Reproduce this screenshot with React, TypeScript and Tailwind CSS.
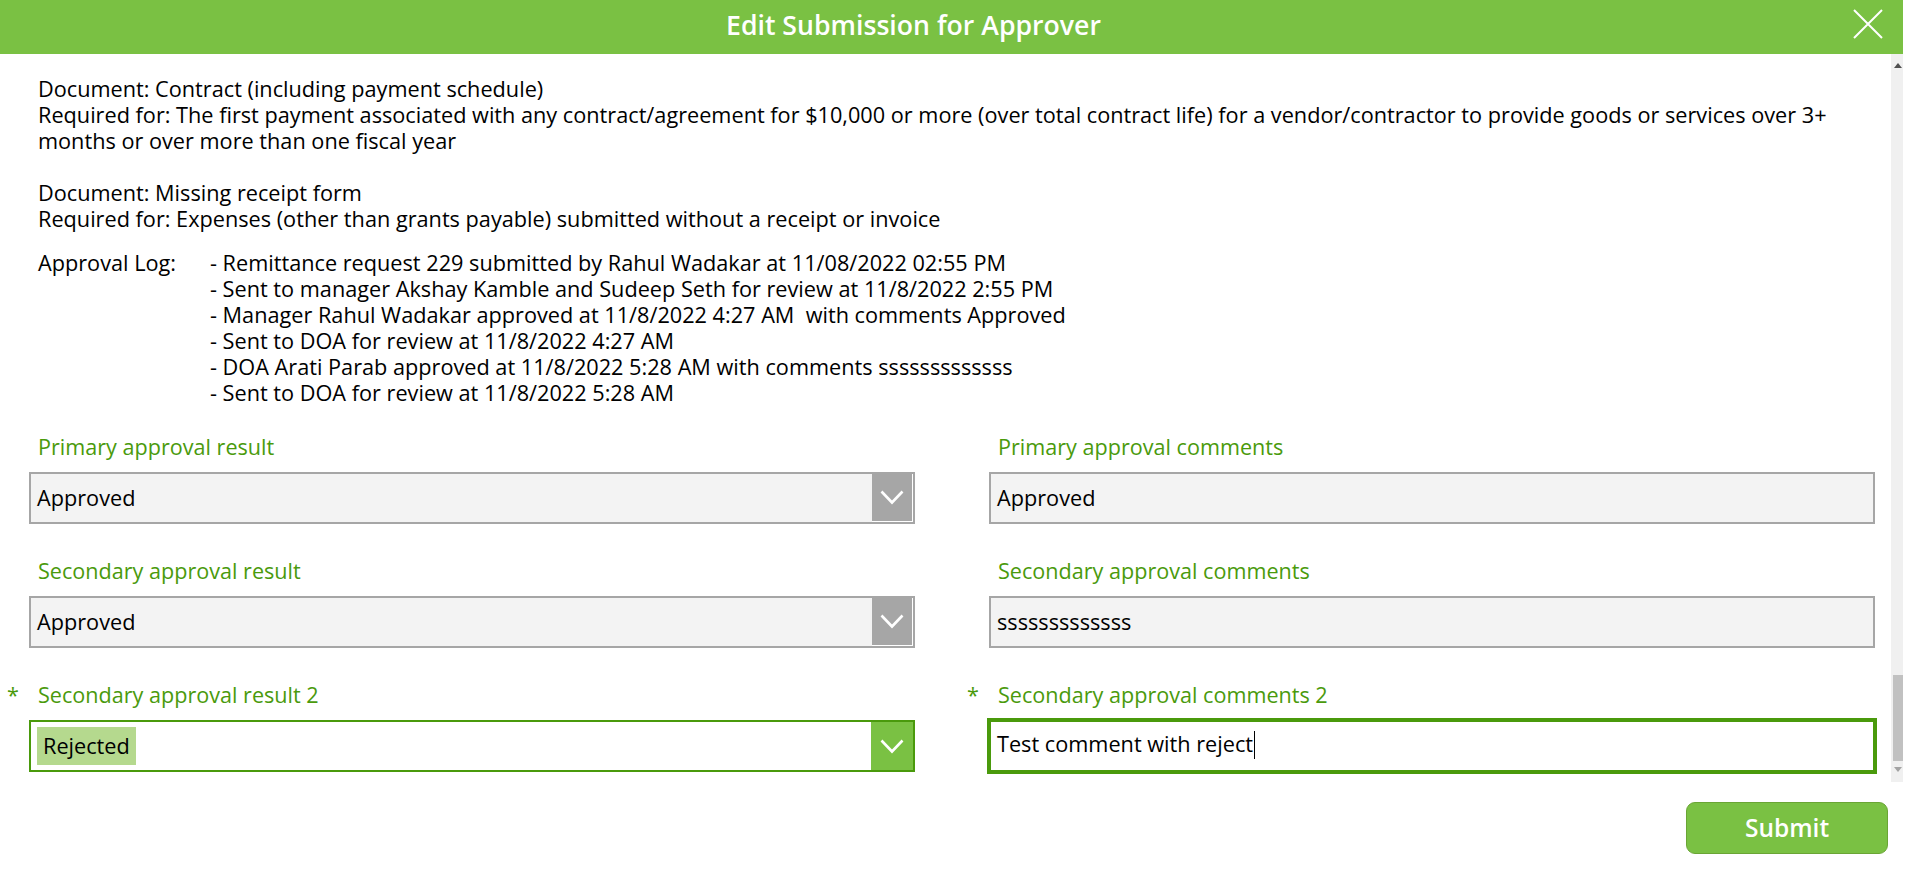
import React from "react";

const Chevron = () => (
  <svg width="24" height="15" viewBox="0 0 24 15" fill="none">
    <path d="M1.5 1.5 L12 12.5 L22.5 1.5" stroke="white" strokeWidth="2.6" />
  </svg>
);

function Label({ text, required }: { text: string; required?: boolean }) {
  return (
    <div className="relative h-[26px] leading-[26px] pl-[9px] text-[21.6px] text-[#4a9a0c]">
      {required && <span className="absolute left-[-22px] top-0">*</span>}
      {text}
    </div>
  );
}

function Dropdown({ value, active }: { value: string; active?: boolean }) {
  if (active) {
    return (
      <div className="flex h-[52px] items-stretch border-2 border-[#4a9a0c] bg-white">
        <div className="flex flex-1 items-center pl-[6px]">
          <span className="flex h-[38px] items-center bg-[#b5d98e] px-[6px] text-[21.7px] text-black">{value}</span>
        </div>
        <div className="flex w-[42px] items-center justify-center bg-[#7ac143]">
          <Chevron />
        </div>
      </div>
    );
  }
  return (
    <div className="flex h-[52px] items-stretch border-2 border-[#a6a6a6] bg-[#f3f3f3]">
      <div className="flex flex-1 items-center pl-[6px] text-[21.7px] text-black">{value}</div>
      <div className="flex w-[41px] items-center justify-center border-r border-b border-white bg-[#a6a6a6]">
        <Chevron />
      </div>
    </div>
  );
}

function TextField({ value, focused }: { value: string; focused?: boolean }) {
  if (focused) {
    return (
      <div className="flex h-[52px] items-center border-2 border-[#4a9a0c] bg-white pb-[3px] pl-[6px] text-[21.7px] text-black ring-2 ring-[#4a9a0c]">
        <span>{value}</span>
        <span className="ml-[1px] h-[28px] w-[1px] bg-black" />
      </div>
    );
  }
  return (
    <div className="flex h-[52px] items-center border-2 border-[#a6a6a6] bg-[#f3f3f3] pl-[6px] text-[21.7px] text-black">
      {value}
    </div>
  );
}

export default function App() {
  const log = [
    "- Remittance request 229 submitted by Rahul Wadakar at 11/08/2022 02:55 PM",
    "- Sent to manager Akshay Kamble and Sudeep Seth for review at 11/8/2022 2:55 PM",
    "- Manager Rahul Wadakar approved at 11/8/2022 4:27 AM\u00a0 with comments Approved",
    "- Sent to DOA for review at 11/8/2022 4:27 AM",
    "- DOA Arati Parab approved at 11/8/2022 5:28 AM with comments sssssssssssss",
    "- Sent to DOA for review at 11/8/2022 5:28 AM",
  ];
  return (
    <div className="h-[873px] w-[1914px] overflow-hidden bg-white font-['Open_Sans',sans-serif]">
      <div className="w-[1903px]">
        {/* Header */}
        <div className="flex h-[54px] items-center bg-[#7ac143]">
          <div className="flex-1 pb-[5px] text-center text-[26.67px] font-semibold text-white">
            Edit Submission for Approver
          </div>
          <div className="flex w-[76px] items-center pl-[26px] pb-[7px]">
            <svg width="30" height="30" viewBox="0 0 30 30">
              <path d="M1 1 L29 29 M29 1 L1 29" stroke="white" strokeWidth="2" />
            </svg>
          </div>
        </div>

        {/* Body */}
        <div className="flex h-[728px]">
          <div className="flex-1 pl-[29px] pt-[22px]">
            <div className="whitespace-nowrap pl-[9px] text-[21.7px] leading-[26px] text-black">
              <div>Document: Contract (including payment schedule)</div>
              <div>
                Required for: The first payment associated with any contract/agreement for $10,000 or more (over total contract life) for a vendor/contractor to provide goods or services over 3+
              </div>
              <div>months or over more than one fiscal year</div>
              <div className="h-[26px]" />
              <div>Document: Missing receipt form</div>
              <div>Required for: Expenses (other than grants payable) submitted without a receipt or invoice</div>
            </div>

            <div className="mt-[18px] flex whitespace-nowrap pl-[9px] text-[21.7px] leading-[26px] text-black">
              <div className="w-[172px]">Approval Log:</div>
              <div>
                {log.map((l) => (
                  <div key={l}>{l}</div>
                ))}
              </div>
            </div>

            <div className="mt-[28px] grid grid-cols-[886px_886px] gap-x-[74px] gap-y-[34px]">
              <div>
                <Label text="Primary approval result" />
                <div className="mt-[12px]">
                  <Dropdown value="Approved" />
                </div>
              </div>
              <div>
                <Label text="Primary approval comments" />
                <div className="mt-[12px]">
                  <TextField value="Approved" />
                </div>
              </div>
              <div>
                <Label text="Secondary approval result" />
                <div className="mt-[12px]">
                  <Dropdown value="Approved" />
                </div>
              </div>
              <div>
                <Label text="Secondary approval comments" />
                <div className="mt-[12px]">
                  <TextField value="sssssssssssss" />
                </div>
              </div>
              <div>
                <Label text="Secondary approval result 2" required />
                <div className="mt-[12px]">
                  <Dropdown value="Rejected" active />
                </div>
              </div>
              <div>
                <Label text="Secondary approval comments 2" required />
                <div className="mt-[12px]">
                  <TextField value="Test comment with reject" focused />
                </div>
              </div>
            </div>
          </div>

          {/* Scrollbar */}
          <div className="relative w-[12px] bg-[#f0f0f0]">
            <div className="absolute left-[3px] top-[9px] h-0 w-0 border-x-[4px] border-b-[5px] border-x-transparent border-b-[#505050]" />
            <div className="absolute left-[2px] top-[621px] h-[86px] w-[10px] bg-[#c1c1c1]" />
            <div className="absolute left-[3px] top-[713px] h-0 w-0 border-x-[4px] border-t-[5px] border-x-transparent border-t-[#a3a3a3]" />
          </div>
        </div>

        {/* Footer */}
        <div className="mt-[20px] flex justify-end pr-[15px]">
          <button className="flex h-[52px] w-[202px] items-center justify-center rounded-[9px] border border-[#6aa535] bg-[#7ac143] text-[24.5px] font-semibold text-white">
            Submit
          </button>
        </div>
      </div>
    </div>
  );
}
